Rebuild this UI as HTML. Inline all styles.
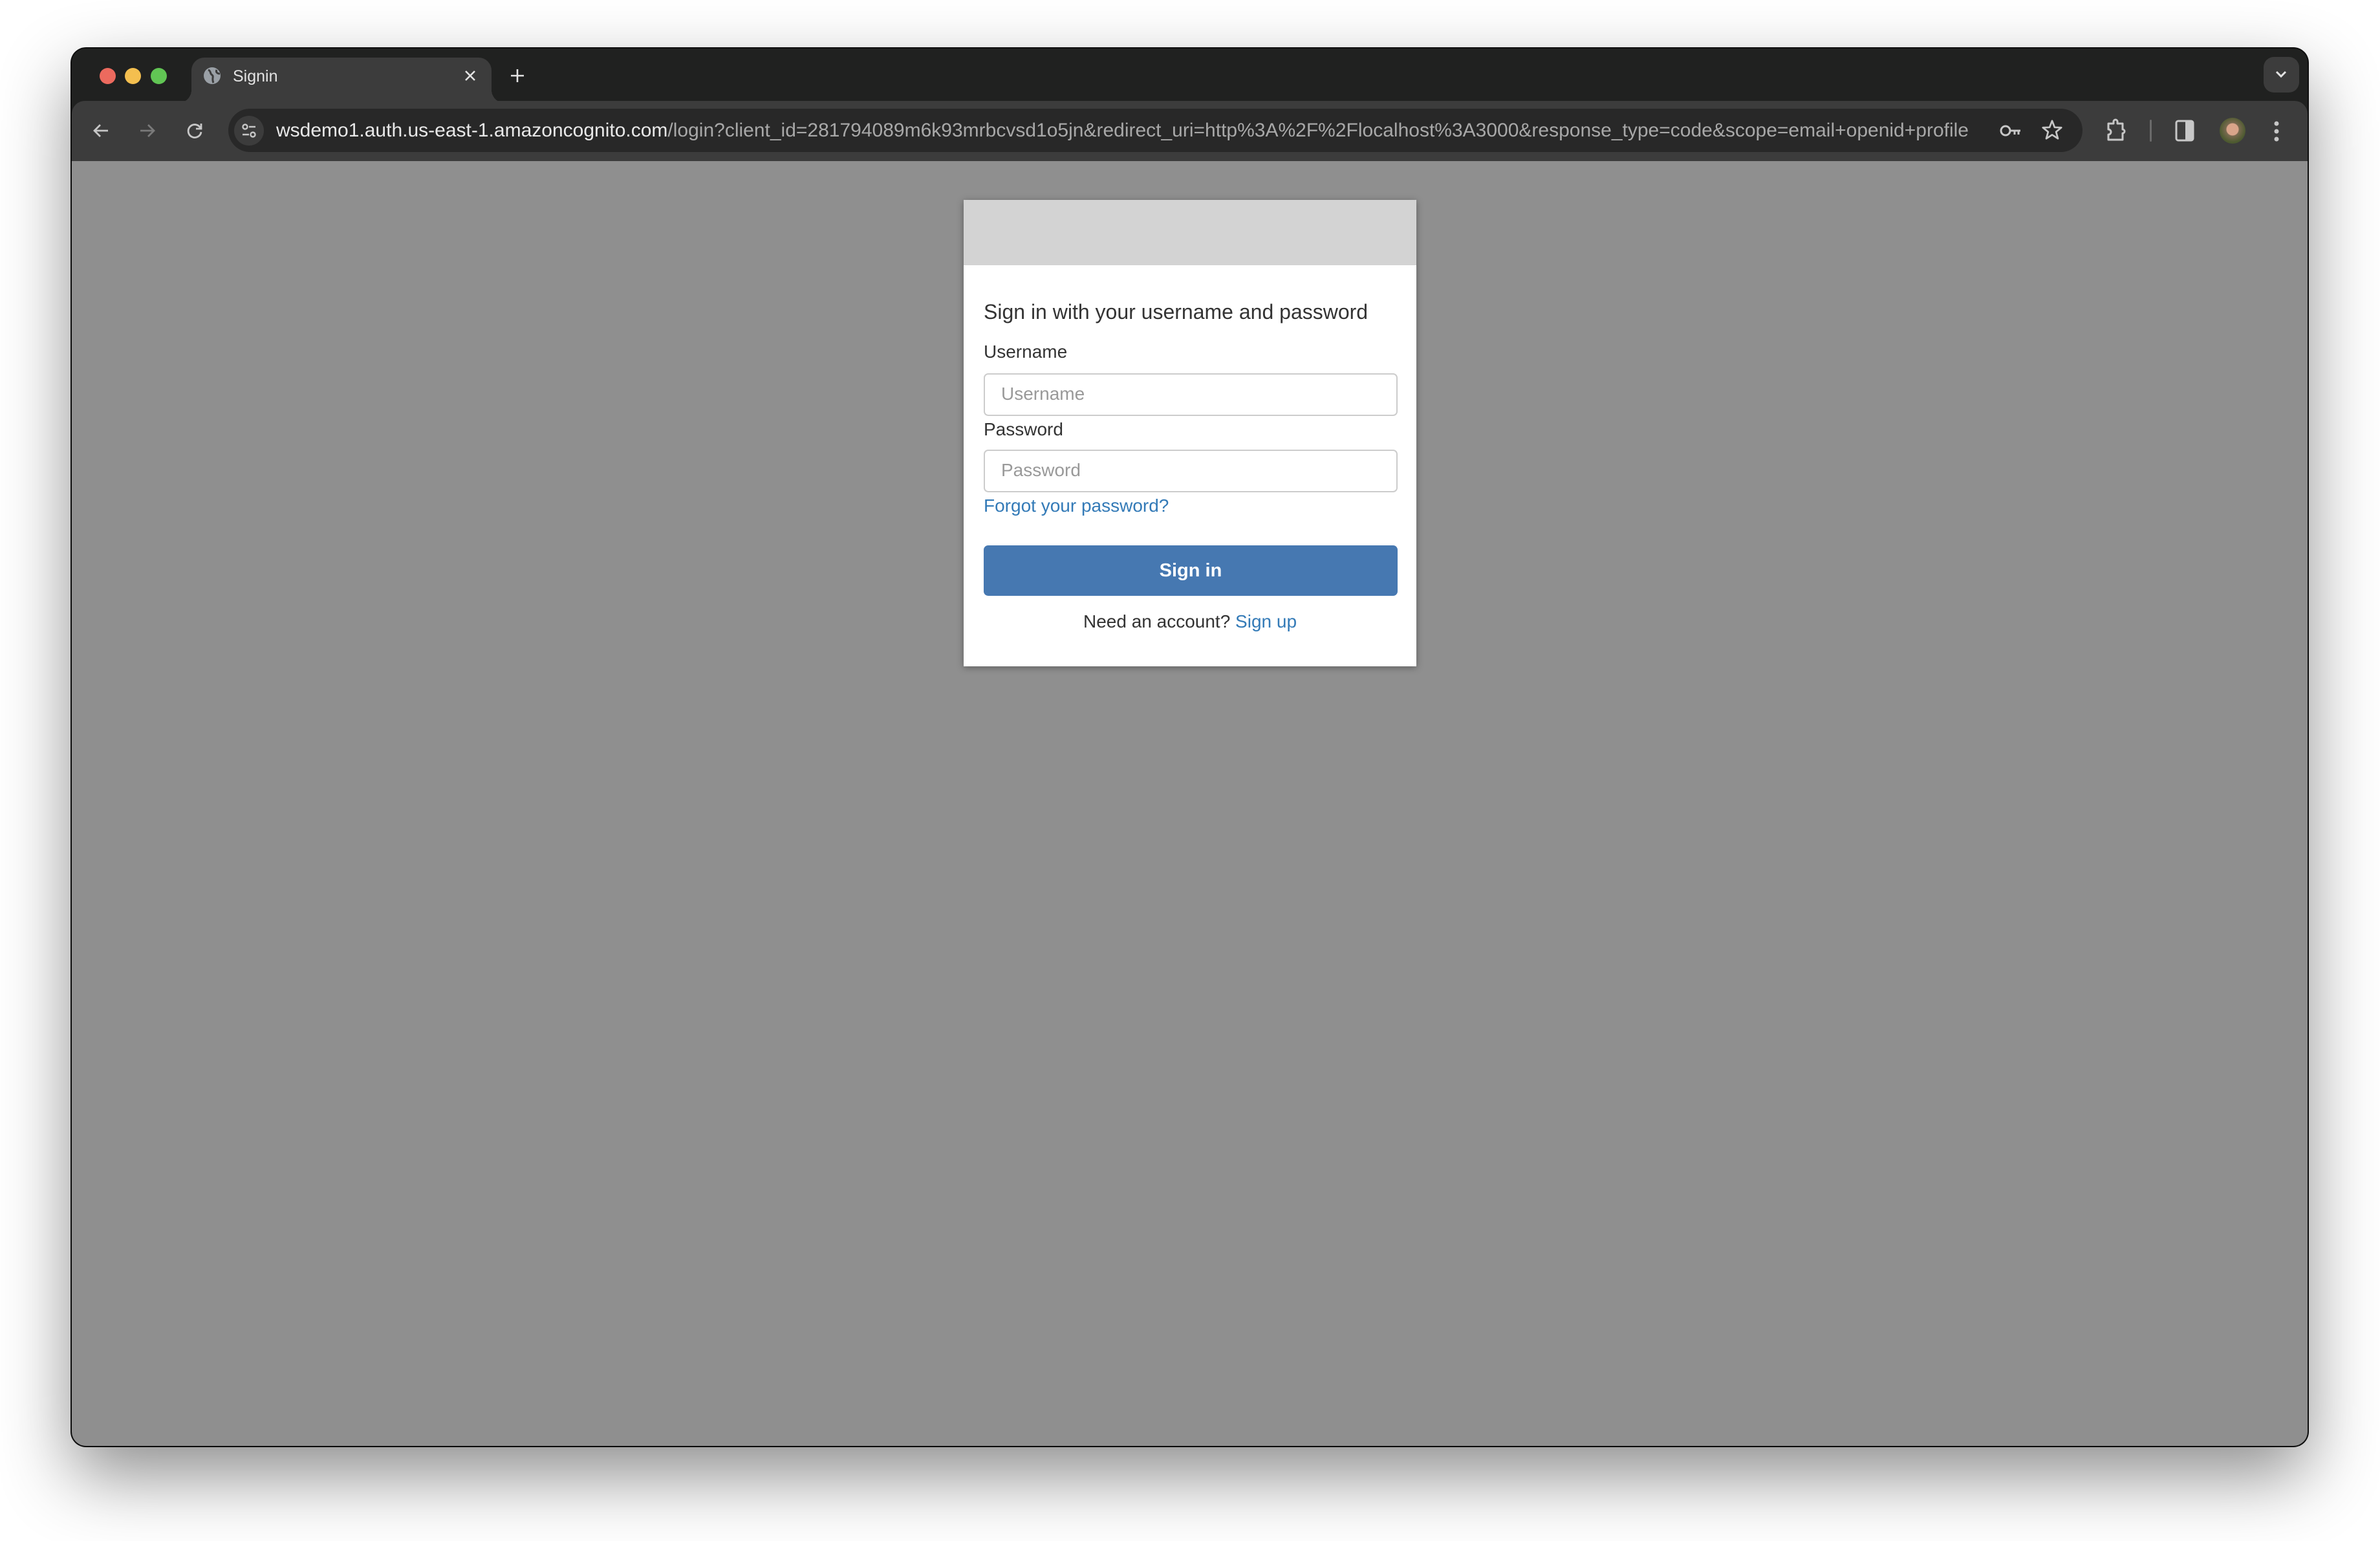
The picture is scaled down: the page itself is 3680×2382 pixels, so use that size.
<!DOCTYPE html>
<html><head><meta charset="utf-8"><style>
*{margin:0;padding:0;box-sizing:border-box}
body{width:3680px;height:2382px;background:#fff;position:relative;overflow:hidden;font-family:"Liberation Sans",Arial,sans-serif}
.win{position:absolute;left:111px;top:75px;width:3457px;height:2160px;border-radius:22px;background:#202120;box-shadow:0 45px 110px rgba(0,0,0,.45),0 0 0 2px #111;overflow:hidden}
.abs{position:absolute}
.tl{position:absolute;top:30px;width:25px;height:25px;border-radius:50%}
.content{position:absolute;left:0;top:174px;width:100%;height:1986px;background:#8f8f8f}
.card{position:absolute;left:1379px;top:60px;width:700px;height:721px;background:#fff;box-shadow:0 2px 10px rgba(0,0,0,.35)}
.card .hd{height:101px;background:#d3d3d3}
.t{position:absolute;white-space:nowrap;color:#333}
.inp{position:absolute;left:31px;width:640px;height:66px;border:2px solid #ccc;border-radius:7px;background:#fff}
.ph{position:absolute;left:25px;top:14px;font-size:28px;color:#999}
</style></head><body>
<div class="win">
  <div class="tl" style="left:43px;background:#ec6a5e"></div>
  <div class="tl" style="left:82px;background:#f4bf4f"></div>
  <div class="tl" style="left:122px;background:#61c554"></div>
  <div class="abs" style="left:185px;top:14px;width:464px;height:90px;background:#3c3c3c;border-radius:20px 20px 0 0"></div>
  <div class="abs" style="left:165px;top:64px;width:20px;height:20px;background:radial-gradient(circle at 0 0,#202120 20px,#3c3c3c 20px)"></div>
  <div class="abs" style="left:649px;top:64px;width:20px;height:20px;background:radial-gradient(circle at 100% 0,#202120 20px,#3c3c3c 20px)"></div>
  <svg class="abs" style="left:202px;top:27px" width="30" height="30" viewBox="0 0 30 30"><circle cx="15" cy="15" r="13" fill="#9aa0a6"/><path d="M9 6 C14 8 11 12 15 14 C18 16 14 20 17 26 M22 6 C20 10 24 12 27 12" stroke="#3c3c3c" stroke-width="3" fill="none"/></svg>
  <div class="t" style="left:249px;top:29px;font-size:25px;color:#e3e3e3">Signin</div>
  <svg class="abs" style="left:604px;top:30px" width="24" height="24" viewBox="0 0 24 24"><path d="M5 5L19 19M19 5L5 19" stroke="#e3e3e3" stroke-width="2.6"/></svg>
  <svg class="abs" style="left:676px;top:29px" width="26" height="26" viewBox="0 0 26 26"><path d="M13 3V23M3 13H23" stroke="#e3e3e3" stroke-width="2.6"/></svg>
  <div class="abs" style="left:3389px;top:13px;width:55px;height:55px;border-radius:16px;background:#3c3c3c"></div>
  <svg class="abs" style="left:3405px;top:30px" width="22" height="20" viewBox="0 0 22 20"><path d="M4 6L11 13L18 6" stroke="#e3e3e3" stroke-width="3" fill="none"/></svg>
  <div class="abs" style="left:0;top:81px;width:100%;height:93px;background:#3c3c3c;border-radius:20px 20px 0 0"></div>
  <svg class="abs" style="left:30px;top:112px" width="30" height="30" viewBox="0 0 30 30"><path d="M26 15H5M14 6L5 15L14 24" stroke="#c7c7c7" stroke-width="2.8" fill="none"/></svg>
  <svg class="abs" style="left:102px;top:112px" width="30" height="30" viewBox="0 0 30 30"><path d="M4 15H25M16 6L25 15L16 24" stroke="#7a7a7a" stroke-width="2.8" fill="none"/></svg>
  <svg class="abs" style="left:175px;top:112px" width="30" height="30" viewBox="0 0 30 30"><path d="M24 11A10 10 0 1 0 25 17" stroke="#c7c7c7" stroke-width="2.8" fill="none"/><path d="M25 4V12H17" stroke="#c7c7c7" stroke-width="2.8" fill="none"/></svg>
  <div class="abs" style="left:242px;top:93px;width:2867px;height:67px;border-radius:34px;background:#282828"></div>
  <div class="abs" style="left:251px;top:104px;width:46px;height:46px;border-radius:50%;background:#3c3c3c"></div>
  <svg class="abs" style="left:260px;top:113px" width="28" height="28" viewBox="0 0 28 28"><circle cx="8" cy="8" r="3.5" stroke="#c7c7c7" stroke-width="2.4" fill="none"/><path d="M14 8H24M4 20H14" stroke="#c7c7c7" stroke-width="2.6"/><circle cx="20" cy="20" r="3.5" stroke="#c7c7c7" stroke-width="2.4" fill="none"/></svg>
  <svg class="abs" style="left:316px;top:108px" width="2640" height="40"><text x="0" y="28" font-family="Liberation Sans, sans-serif" font-size="30" textLength="2617" lengthAdjust="spacingAndGlyphs"><tspan fill="#e8e8e8">wsdemo1.auth.us-east-1.amazoncognito.com</tspan><tspan fill="#a8a8a8">/login?client_id=281794089m6k93mrbcvsd1o5jn&amp;redirect_uri=http%3A%2F%2Flocalhost%3A3000&amp;response_type=code&amp;scope=email+openid+profile</tspan></text></svg>
  <svg class="abs" style="left:2980px;top:113px" width="36" height="28" viewBox="0 0 36 28"><circle cx="10" cy="14" r="7" stroke="#c7c7c7" stroke-width="3" fill="none"/><path d="M17 14H33M24 14V20M30 14V20" stroke="#c7c7c7" stroke-width="3"/></svg>
  <svg class="abs" style="left:3044px;top:108px" width="36" height="36" viewBox="0 0 24 24"><path d="M12 2.5L14.6 9.2L21.5 9.5L16.1 13.9L18 20.8L12 16.9L6 20.8L7.9 13.9L2.5 9.5L9.4 9.2Z" stroke="#c7c7c7" stroke-width="1.8" fill="none" stroke-linejoin="round"/></svg>
  <svg class="abs" style="left:3144px;top:108px" width="36" height="38" viewBox="0 0 36 38"><path d="M5 8H13V5A3 3 0 0 1 19 5V8H27V17A3 3 0 0 1 27 23V33H5V25A4 4 0 0 0 5 17Z" stroke="#c7c7c7" stroke-width="3" fill="none" stroke-linejoin="round"/></svg>
  <div class="abs" style="left:3213px;top:110px;width:3px;height:34px;background:#6a6a6a;border-radius:2px"></div>
  <svg class="abs" style="left:3252px;top:110px" width="32" height="34" viewBox="0 0 32 34"><rect x="2" y="2" width="26" height="30" rx="3" stroke="#c7c7c7" stroke-width="3" fill="none"/><rect x="16" y="2" width="12" height="30" fill="#c7c7c7"/></svg>
  <div class="abs" style="left:3321px;top:107px;width:40px;height:40px;border-radius:50%;background:radial-gradient(circle at 50% 45%,#d9a58a 0 9px,#7a6a50 10px,#4d5a30 20px)"></div>
  <svg class="abs" style="left:3403px;top:110px" width="12" height="36" viewBox="0 0 12 36"><circle cx="6" cy="6" r="3.5" fill="#c7c7c7"/><circle cx="6" cy="18" r="3.5" fill="#c7c7c7"/><circle cx="6" cy="30" r="3.5" fill="#c7c7c7"/></svg>
  <div class="content">
    <div class="card">
      <div class="hd"></div>
      <div class="t" style="left:31px;top:155px;font-size:32px">Sign in with your username and password</div>
      <div class="t" style="left:31px;top:219px;font-size:28px">Username</div>
      <div class="inp" style="top:268px"><div class="ph">Username</div></div>
      <div class="t" style="left:31px;top:339px;font-size:28px">Password</div>
      <div class="inp" style="top:386px"><div class="ph">Password</div></div>
      <div class="t" style="left:31px;top:457px;font-size:28px;color:#337ab7">Forgot your password?</div>
      <div class="abs" style="left:31px;top:534px;width:640px;height:78px;background:#4678b1;border-radius:7px;color:#fff;font-weight:bold;font-size:29px;text-align:center;line-height:78px">Sign in</div>
      <div class="t" style="left:0;width:700px;top:636px;font-size:28px;text-align:center">Need an account? <span style="color:#337ab7">Sign up</span></div>
    </div>
  </div>
</div>
</body></html>
